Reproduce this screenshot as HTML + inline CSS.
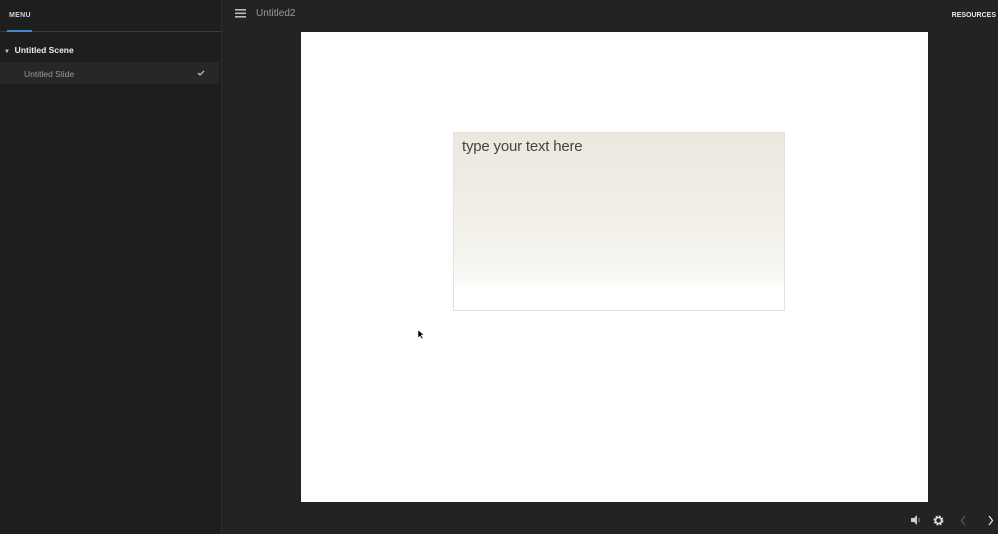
<!DOCTYPE html>
<html><head><meta charset="utf-8"><style>
html,body{margin:0;padding:0;width:998px;height:534px;overflow:hidden;background:#222322;font-family:"Liberation Sans",sans-serif}
#side{position:absolute;left:0;top:0;width:221px;height:534px;background:#1d1e1d;border-right:1px solid #2b2c2b}
#menu{position:absolute;left:9px;top:12px;font-size:7px;font-weight:bold;color:#cfd6e0;letter-spacing:.3px}
#tabline{position:absolute;left:0;top:31px;width:221px;height:1px;background:#3a3b3a}
#tabline i{position:absolute;left:7px;top:-1px;width:25px;height:2px;background:#3f8ad0}
#scene{position:absolute;left:4px;top:45px;font-size:8.5px;font-weight:bold;color:#eee}
#slide{position:absolute;left:0;top:62px;width:219px;height:22px;background:#262726}
#slide span{position:absolute;left:24px;top:7px;font-size:8.5px;color:#9a9a9a}
#title{position:absolute;left:256px;top:8px;font-size:10px;color:#9a9a9a}
#res{position:absolute;right:2px;top:12px;font-size:7px;font-weight:bold;color:#e8e8e8}
#stage{position:absolute;left:301px;top:32px;width:627px;height:470px;background:#fff}
#box{position:absolute;left:453px;top:132px;width:330px;height:177px;border:1px solid #e6e2d8;background:linear-gradient(#ebe8df 0%,#f0eee6 40%,#f6f4ef 70%,#fbfaf7 85%,#fff 87%)}
#box span{position:absolute;left:8px;top:5px;font-size:15px;color:#444;letter-spacing:-.2px}
</style></head><body>
<div id="side">
<div id="menu">MENU</div>
<div id="tabline"><i></i></div>
<div id="scene"><span style="font-size:6px;color:#ccc">▼</span>&nbsp; Untitled Scene</div>
<div id="slide"><span>Untitled Slide</span>
<svg style="position:absolute;left:197px;top:8px" width="8" height="6"><path d="M1 3l2 2 4-4" stroke="#bbb" stroke-width="1.3" fill="none"/></svg></div>
</div>
<svg style="position:absolute;left:235px;top:9px" width="11" height="9"><rect y="0" width="11" height="1.6" fill="#bbb"/><rect y="3.5" width="11" height="1.6" fill="#bbb"/><rect y="7" width="11" height="1.6" fill="#bbb"/></svg>
<div id="title">Untitled2</div>
<div id="res">RESOURCES</div>
<div id="stage"></div>
<div id="box"><span>type your text here</span></div>
<svg style="position:absolute;left:417px;top:329px" width="7" height="11"><path d="M1 1v8l2-2 2 3 1-1-2-3h3z" fill="#000" stroke="#fff" stroke-width=".5"/></svg>
<svg style="position:absolute;left:910px;top:515px" width="12" height="10"><path d="M1 3h3l3-3v10l-3-3h-3z" fill="#ccc"/><path d="M8.5 3a3 3 0 0 1 0 4" stroke="#999" fill="none"/></svg>
<svg style="position:absolute;left:933px;top:515px" width="11" height="11"><circle cx="5.5" cy="5.5" r="3.8" fill="none" stroke="#ddd" stroke-width="2.4" stroke-dasharray="1.8 1.2"/><circle cx="5.5" cy="5.5" r="3" fill="none" stroke="#ddd" stroke-width="1.6"/></svg>
<svg style="position:absolute;left:960px;top:515px" width="7" height="11"><path d="M5 1L1.5 5.5 5 10" stroke="#555" stroke-width="1.3" fill="none"/></svg>
<svg style="position:absolute;left:987px;top:515px" width="7" height="11"><path d="M2 1l3.5 4.5L2 10" stroke="#ddd" stroke-width="1.3" fill="none"/></svg>
</body></html>
